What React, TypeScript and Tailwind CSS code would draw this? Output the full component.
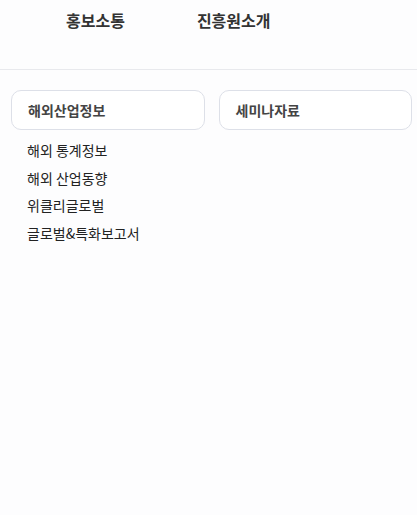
const menus = ["홍보소통", "진흥원소개"]

const tabs = ["해외산업정보", "세미나자료"]

const links = ["해외 통계정보", "해외 산업동향", "위클리글로벌", "글로벌&특화보고서"]

export default function App() {
    return (
        <div
            className="min-h-[515px] bg-[#fdfdfe] text-[#222]"
            style={{ fontFamily: '"Noto Sans CJK KR", "Noto Sans", sans-serif' }}
        >
            <header className="h-[70px] border-b border-[#e8e9ed]">
                <nav className="flex gap-[72px] pl-[66px] pt-[7px]">
                    {menus.map((m) => (
                        <a key={m} className="text-[16px] font-bold leading-[26px] text-[#333]">
                            {m}
                        </a>
                    ))}
                </nav>
            </header>

            <div className="grid grid-cols-2 gap-[14px] pl-[11px] pr-[5px] pt-[20px]">
                {tabs.map((t) => (
                    <div
                        key={t}
                        className="flex h-[40px] items-center rounded-[10px] border border-[#dde0e8] bg-white px-[16px] text-[14px] font-bold text-[#444]"
                    >
                        {t}
                    </div>
                ))}
            </div>

            <ul className="mt-[7px] pl-[27px]">
                {links.map((l) => (
                    <li key={l} className="h-[27.5px] text-[14px] leading-[27.5px] text-[#222]">
                        {l}
                    </li>
                ))}
            </ul>
        </div>
    )
}
